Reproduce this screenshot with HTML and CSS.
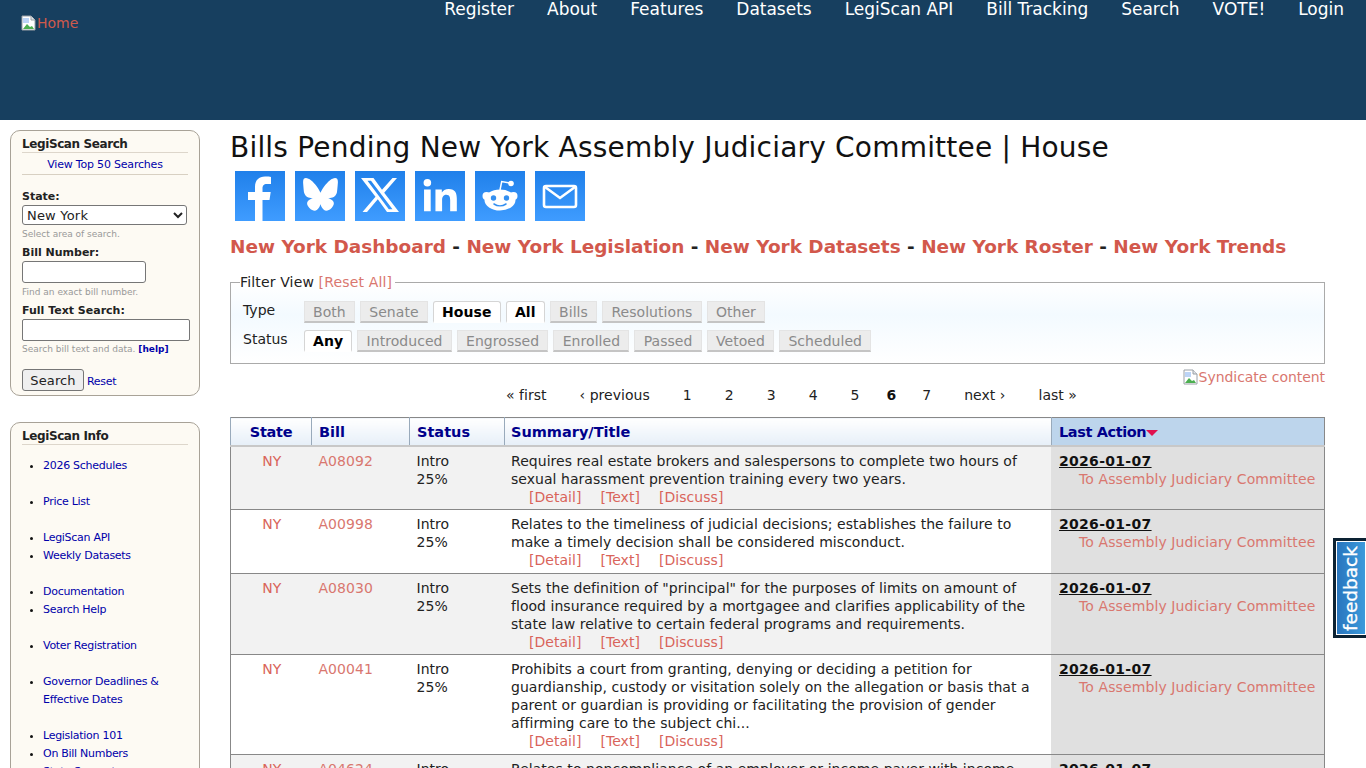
FILE: index.html
```html
<!DOCTYPE html>
<html lang="en">
<head>
<meta charset="utf-8">
<title>Bills Pending New York Assembly Judiciary Committee | House</title>
<link rel="stylesheet" href="styles.css">
</head>
<body>
<header class="site-header">
  <a class="logo" href="#"><svg class="broken" viewBox="0 0 16 16"><path d="M1 1h9l4 4v10H1z" fill="#fff" stroke="#9aa0a6"/><path d="M10 1v4h4" fill="#dfe3e8" stroke="#9aa0a6"/><path d="M2 14l4-5 3 3 2-1 2 3z" fill="#4caf50"/><path d="M2 3h6v5H2z" fill="#bcd4f6"/></svg>Home</a>
  <nav class="nav">
    <a href="#">Register</a><a href="#">About</a><a href="#">Features</a><a href="#">Datasets</a><a href="#">LegiScan API</a><a href="#">Bill Tracking</a><a href="#">Search</a><a href="#">VOTE!</a><a href="#">Login</a>
  </nav>
</header>
<div class="page">
  <aside class="sidebar">
    <section class="box search-box">
      <h2 class="box-title">LegiScan Search</h2>
      <a class="top50" href="#">View Top 50 Searches</a>
      <label class="lbl">State:</label>
      <select class="state"><option>New York</option></select>
      <div class="hint">Select area of search.</div>
      <label class="lbl">Bill Number:</label>
      <input class="bill-input" type="text">
      <div class="hint">Find an exact bill number.</div>
      <label class="lbl">Full Text Search:</label>
      <input class="text-input" type="text">
      <div class="hint">Search bill text and data. <a class="help" href="#">[help]</a></div>
      <div class="actions"><button class="btn" type="button">Search</button><a class="reset" href="#">Reset</a></div>
    </section>
    <section class="box info-box">
      <h2 class="box-title">LegiScan Info</h2>
      <ul class="info-list">
        <li><a href="#">2026 Schedules</a></li>
        <li class="gap"><a href="#">Price List</a></li>
        <li class="gap"><a href="#">LegiScan API</a></li>
        <li><a href="#">Weekly Datasets</a></li>
        <li class="gap"><a href="#">Documentation</a></li>
        <li><a href="#">Search Help</a></li>
        <li class="gap"><a href="#">Voter Registration</a></li>
        <li class="gap"><a href="#">Governor Deadlines &amp; Effective Dates</a></li>
        <li class="gap"><a href="#">Legislation 101</a></li>
        <li><a href="#">On Bill Numbers</a></li>
        <li><a href="#">State Support</a></li>
      </ul>
    </section>
  </aside>
  <main class="main">
    <h1 class="title">Bills Pending New York Assembly Judiciary Committee | House</h1>
    <div class="share">
      <a class="sq" href="#" aria-label="Facebook"><svg viewBox="0 0 50 50"><path fill="#fff" d="M20 50V29h-7v-8h7v-5c0-7 4-10.500 10-10.500 2.500 0 5 .2 6 .4v7h-4c-3.500 0-4.500 2-4.500 4.500V21h8.200l-1.200 8h-7v21z"/></svg></a>
      <a class="sq" href="#" aria-label="Bluesky"><svg viewBox="0 0 50 50"><path fill="#fff" transform="translate(3.750 1.400) scale(.87)" d="M14 9c5 3.800 9.500 10.500 11 14.500 1.500-4 6-10.700 11-14.500 3.600-2.700 9-4.600 9 2 0 1.300-.8 10.900-1.200 12.500-1.500 5.400-7 6.800-11.800 6 8.500 1.400 10.600 6.200 6 11-8.800 9-12.600-2.300-13-4.200-.4 1.900-4.200 13.200-13 4.200-4.600-4.800-2.500-9.600 6-11-4.800.8-10.300-.6-11.800-6C5.800 21.900 5 12.300 5 11c0-6.600 5.400-4.700 9-2z"/></svg></a>
      <a class="sq" href="#" aria-label="X"><svg viewBox="0 0 50 50"><path fill="#fff" fill-rule="evenodd" d="M6 7h12.500l8.500 11.800L37.500 7H42L29.200 21.800 44 41H32l-9.200-12.800L12 41H7.500l13-15.200zM12.500 9.800 33.800 38.200h3.700L16 9.800z"/></svg></a>
      <a class="sq" href="#" aria-label="LinkedIn"><svg viewBox="0 0 50 50"><path fill="#fff" transform="translate(.5 .4) scale(.95)" d="M9 19h7v23H9zM12.500 8a4 4 0 1 1 0 8 4 4 0 0 1 0-8zM21 19h6.700v3.200c1.200-2 3.700-3.800 7.300-3.800 7 0 8.500 4.500 8.500 10.500V42h-7V30.500c0-2.800-.5-5.800-4-5.800s-4.500 2.700-4.500 5.600V42h-7z"/></svg></a>
      <a class="sq" href="#" aria-label="Reddit"><svg viewBox="0 0 50 50"><circle cx="11.500" cy="25" r="4" fill="#fff"/><circle cx="38.500" cy="25" r="4" fill="#fff"/><ellipse cx="25" cy="29" rx="15.500" ry="10.500" fill="#fff"/><path d="M25 19l1.700-8.500 8 1.500" fill="none" stroke="#fff" stroke-width="1.500"/><circle cx="36" cy="12.500" r="2.800" fill="#fff"/><circle cx="18.500" cy="27" r="2.700" fill="#338ff0"/><circle cx="31.500" cy="27" r="2.700" fill="#338ff0"/><path d="M19 33c3.500 2.300 8.500 2.300 12 0" fill="none" stroke="#338ff0" stroke-width="1.500" stroke-linecap="round"/></svg></a>
      <a class="sq" href="#" aria-label="Email"><svg viewBox="0 0 50 50"><rect x="9" y="15" width="32" height="21" rx="2" fill="none" stroke="#fff" stroke-width="2.600"/><path d="M10 16l15 11 15-11" fill="none" stroke="#fff" stroke-width="2.600"/></svg></a>
    </div>
    <div class="state-links">
      <a href="#">New York Dashboard</a> - <a href="#">New York Legislation</a> - <a href="#">New York Datasets</a> - <a href="#">New York Roster</a> - <a href="#">New York Trends</a>
    </div>
    <fieldset class="filter">
      <legend>Filter View <a href="#">[Reset All]</a></legend>
      <div class="filter-row">
        <span class="filter-label">Type</span>
        <div class="tabs"><a class="tab" href="#">Both</a><a class="tab" href="#">Senate</a><a class="tab on" href="#">House</a><a class="tab on" href="#">All</a><a class="tab" href="#">Bills</a><a class="tab" href="#">Resolutions</a><a class="tab" href="#">Other</a></div>
      </div>
      <div class="filter-row">
        <span class="filter-label">Status</span>
        <div class="tabs"><a class="tab on" href="#">Any</a><a class="tab" href="#">Introduced</a><a class="tab" href="#">Engrossed</a><a class="tab" href="#">Enrolled</a><a class="tab" href="#">Passed</a><a class="tab" href="#">Vetoed</a><a class="tab" href="#">Scheduled</a></div>
      </div>
    </fieldset>
    <div class="syndicate"><a href="#"><svg class="broken" viewBox="0 0 16 16"><path d="M1 1h9l4 4v10H1z" fill="#fff" stroke="#9aa0a6"/><path d="M10 1v4h4" fill="#dfe3e8" stroke="#9aa0a6"/><path d="M2 14l4-5 3 3 2-1 2 3z" fill="#4caf50"/><path d="M2 3h6v5H2z" fill="#bcd4f6"/></svg>Syndicate content</a></div>
    <div class="pager">
      <a href="#">« first</a><a href="#">‹ previous</a><a href="#">1</a><a href="#">2</a><a href="#">3</a><a href="#">4</a><a href="#">5</a><b>6</b><a href="#">7</a><a href="#">next ›</a><a href="#">last »</a>
    </div>
    <table class="bills">
      <thead>
        <tr><th class="c-state">State</th><th class="c-bill">Bill</th><th class="c-status">Status</th><th class="c-sum">Summary/Title</th><th class="c-act">Last Action<span class="arrow"></span></th></tr>
      </thead>
      <tbody>
        <tr class="odd"><td class="c-state"><a href="#">NY</a></td><td class="c-bill"><a href="#">A08092</a></td><td class="c-status">Intro<br>25%</td><td class="c-sum">Requires real estate brokers and salespersons to complete two hours of sexual harassment prevention training every two years.<div class="row-links"><a href="#">[Detail]</a><a href="#">[Text]</a><a href="#">[Discuss]</a></div></td><td class="c-act"><b class="date">2026-01-07</b><a class="act" href="#">To Assembly Judiciary Committee</a></td></tr>
        <tr><td class="c-state"><a href="#">NY</a></td><td class="c-bill"><a href="#">A00998</a></td><td class="c-status">Intro<br>25%</td><td class="c-sum">Relates to the timeliness of judicial decisions; establishes the failure to make a timely decision shall be considered misconduct.<div class="row-links"><a href="#">[Detail]</a><a href="#">[Text]</a><a href="#">[Discuss]</a></div></td><td class="c-act"><b class="date">2026-01-07</b><a class="act" href="#">To Assembly Judiciary Committee</a></td></tr>
        <tr class="odd"><td class="c-state"><a href="#">NY</a></td><td class="c-bill"><a href="#">A08030</a></td><td class="c-status">Intro<br>25%</td><td class="c-sum">Sets the definition of "principal" for the purposes of limits on amount of flood insurance required by a mortgagee and clarifies applicability of the state law relative to certain federal programs and requirements.<div class="row-links"><a href="#">[Detail]</a><a href="#">[Text]</a><a href="#">[Discuss]</a></div></td><td class="c-act"><b class="date">2026-01-07</b><a class="act" href="#">To Assembly Judiciary Committee</a></td></tr>
        <tr><td class="c-state"><a href="#">NY</a></td><td class="c-bill"><a href="#">A00041</a></td><td class="c-status">Intro<br>25%</td><td class="c-sum">Prohibits a court from granting, denying or deciding a petition for guardianship, custody or visitation solely on the allegation or basis that a parent or guardian is providing or facilitating the provision of gender affirming care to the subject chi...<div class="row-links"><a href="#">[Detail]</a><a href="#">[Text]</a><a href="#">[Discuss]</a></div></td><td class="c-act"><b class="date">2026-01-07</b><a class="act" href="#">To Assembly Judiciary Committee</a></td></tr>
        <tr class="odd"><td class="c-state"><a href="#">NY</a></td><td class="c-bill"><a href="#">A04624</a></td><td class="c-status">Intro<br>25%</td><td class="c-sum">Relates to noncompliance of an employer or income payer with income withholding orders.<div class="row-links"><a href="#">[Detail]</a><a href="#">[Text]</a><a href="#">[Discuss]</a></div></td><td class="c-act"><b class="date">2026-01-07</b><a class="act" href="#">To Assembly Judiciary Committee</a></td></tr>
      </tbody>
    </table>
  </main>
</div>
<a class="feedback" href="#"><span>feedback</span></a>
</body>
</html>
```
FILE: styles.css
```css
* { box-sizing: border-box; }
html, body { margin: 0; padding: 0; }
html { height: 768px; overflow: hidden; }
body { height: 768px; overflow: hidden; background: #fff; color: #222; font-family: "DejaVu Sans", Verdana, sans-serif; font-size: 14px; line-height: 18px; }
a { text-decoration: none; color: #d9645a; }
.broken { width: 16px; height: 16px; flex: none; }

.site-header { height: 120px; background: #173f5f; display: flex; justify-content: space-between; align-items: flex-start; }
.logo { display: flex; align-items: center; margin: 14px 0 0 21px; font-size: 14px; height: 18px; color: #cf5a4c; }
.nav { display: flex; gap: 33px; padding-right: 22px; font-size: 17px; line-height: 18px; letter-spacing: -0.01px; }
.nav a { color: #fff; }

.page { display: flex; align-items: flex-start; padding: 10px 41px 0 10px; }
.sidebar { width: 190px; flex: none; margin-right: 30px; display: flex; flex-direction: column; gap: 26px; }
.box { border: 1px solid #a8a297; border-radius: 10px; background: #fdfaf3; padding: 5px 11px; font-size: 11px; }
.box-title { margin: 0; font-size: 12px; line-height: 16px; font-weight: bold; color: #222; letter-spacing: -0.4px; border-bottom: 1px solid #ddd6cb; }
.search-box { height: 266px; }
.top50 { display: block; text-align: center; color: #0000aa; letter-spacing: -0.2px; padding-top: 3px; line-height: 18px; border-bottom: 1px solid #d8d0c2; }
.lbl { display: block; font-weight: bold; color: #222; line-height: 16px; margin-top: 0; }
.top50 + .lbl { margin-top: 14px; }
.hint + .lbl { margin-top: 2px; }
.state { display: block; width: 165px; height: 20px; font-family: "DejaVu Sans", sans-serif; font-size: 13px; letter-spacing: .2px; border: 1px solid #767676; border-radius: 3px; background: #fff; color: #222; padding: 0; }
.hint { font-size: 9px; color: #999; line-height: 17px; padding-top: 1px; }
.text-input + .hint { padding-top: 0; }
.bill-input { display: block; width: 124px; height: 22px; border: 1px solid #767676; border-radius: 3px; background: #fff; margin: 0; padding: 0; }
.text-input { display: block; width: 168px; height: 22px; border: 1px solid #767676; border-radius: 2px; background: #fff; margin: 0; padding: 0; }
.help { color: #0000aa; font-weight: bold; }
.actions { display: flex; align-items: center; gap: 3px; margin-top: 11px; }
.btn { width: 62px; height: 22px; padding: 0; font-family: "DejaVu Sans", sans-serif; font-size: 13px; letter-spacing: .1px; color: #222; background: #efefef; border: 1px solid #767676; border-radius: 3px; }
.reset { color: #0000aa; letter-spacing: -0.3px; padding-top: 4px; }
.info-box { height: 500px; }
.info-list { margin: 12px 0 0; padding: 0 0 0 21px; line-height: 18px; list-style: disc; letter-spacing: -0.28px; color: #111; }
.info-list a { color: #0000aa; }
.info-list .gap { margin-top: 18px; }

.main { flex: 1; min-width: 0; }
.title { margin: 1px 0 0; font-size: 28px; line-height: 34px; font-weight: normal; color: #111; letter-spacing: .2px; }
.share { display: flex; gap: 10px; padding-left: 5px; margin-top: 6px; }
.sq { width: 50px; height: 50px; display: block; background: linear-gradient(#2080ea, #3f9cff); }
.sq svg { width: 50px; height: 50px; display: block; }
.state-links { margin-top: 14px; font-size: 18.450px; line-height: 24px; font-weight: bold; color: #222; }
.state-links a { color: #d2584c; }

.filter { margin: 14px 0 0; padding: 8px 12px 13px; height: 91px; border: 1px solid #aaa; background: linear-gradient(#fff, #f3faff 40%, #fff); min-width: 0; }
.filter legend { padding: 0 3px 0 0; margin-left: -3px; font-size: 14px; line-height: 18px; color: #222; letter-spacing: .15px; }
.filter legend a { color: #d9776f; }
.filter-row { display: flex; align-items: flex-start; height: 29px; }
.filter-label { width: 60px; flex: none; margin-top: 2px; }
.tabs { display: flex; gap: 5px; padding-top: 2px; padding-left: .75px; }
.tab { height: 22px; line-height: 21px; padding: 0 8.250px; color: #8a8a8a; background: #ececec; border: 1px solid #e4e4e4; border-bottom: 2px solid #c4c4c4; letter-spacing: .05px; white-space: nowrap; }
.tab.on { color: #000; font-weight: bold; background: #fff; border-color: #d5d5d5; border-bottom-color: #fff; border-radius: 3px 3px 0 0; }

.syndicate { display: flex; justify-content: flex-end; margin-top: 4px; height: 18px; letter-spacing: -0.05px; }
.syndicate a { display: flex; align-items: center; color: #d9776f; }
.pager { display: flex; padding-left: 276px; height: 31px; line-height: 18px; letter-spacing: .03px; }
.pager a, .pager b { color: #222; margin-right: 33px; }
.pager b { color: #111; margin-left: -6px; margin-right: 26px; }

.bills { width: 1095px; border-collapse: collapse; table-layout: fixed; font-size: 14px; border: 1px solid #888; }
.bills th { height: 28px; padding: 1px 7px 0; background: linear-gradient(#fff, #e6eff8); color: #00008b; font-weight: bold; text-align: left; font-size: 14.500px; border-left: 1px solid #9ab; border-bottom: 2px solid #c8c8c8; }
.bills th.c-state { text-align: center; width: 81px; letter-spacing: -0.3px; }
.bills th.c-bill { width: 98px; }
.bills th.c-status { width: 95px; }
.bills th.c-sum { width: 547px; padding-left: 6px; }
.bills th.c-act { background: #bdd5ec; letter-spacing: -0.4px; }
.arrow { display: inline-block; width: 0; height: 0; border: 6px solid transparent; border-top: 6px solid #e0104f; border-bottom: 0; vertical-align: 1px; }
.bills td { vertical-align: top; padding: 5px 6px 3.500px 7px; border-bottom: 1px solid #888; line-height: 18px; color: #222; letter-spacing: .04px; }
.bills tr.odd td { background: #f2f2f2; }
.bills td.c-state { text-align: center; }
.bills td.c-bill a { color: #d9776f; }
.bills td.c-sum { padding-left: 6.500px; }
.bills td.c-act, .bills tr.odd td.c-act { background: #e0e0e0; border-left: 1px solid #e0e0e0; }
.row-links { display: flex; gap: 19px; padding-left: 18px; }
.date { display: block; text-decoration: underline; color: #111; letter-spacing: .3px; }
.act { display: block; padding-left: 20px; color: #d9776f; white-space: nowrap; letter-spacing: .1px; }

.feedback { position: fixed; right: 0; top: 538px; width: 33px; height: 100px; border: 3px solid #0c2233; border-right: 0; background: linear-gradient(90deg, #2874bd, #3c9bdc); box-shadow: inset 0 0 0 1px #fff; display: flex; align-items: center; justify-content: center; }
.feedback span { writing-mode: vertical-rl; transform: rotate(180deg); color: #fff; font-size: 18.500px; font-weight: normal; -webkit-text-stroke: .3px #fff; line-height: 1; font-family: "DejaVu Sans", sans-serif; }
```
